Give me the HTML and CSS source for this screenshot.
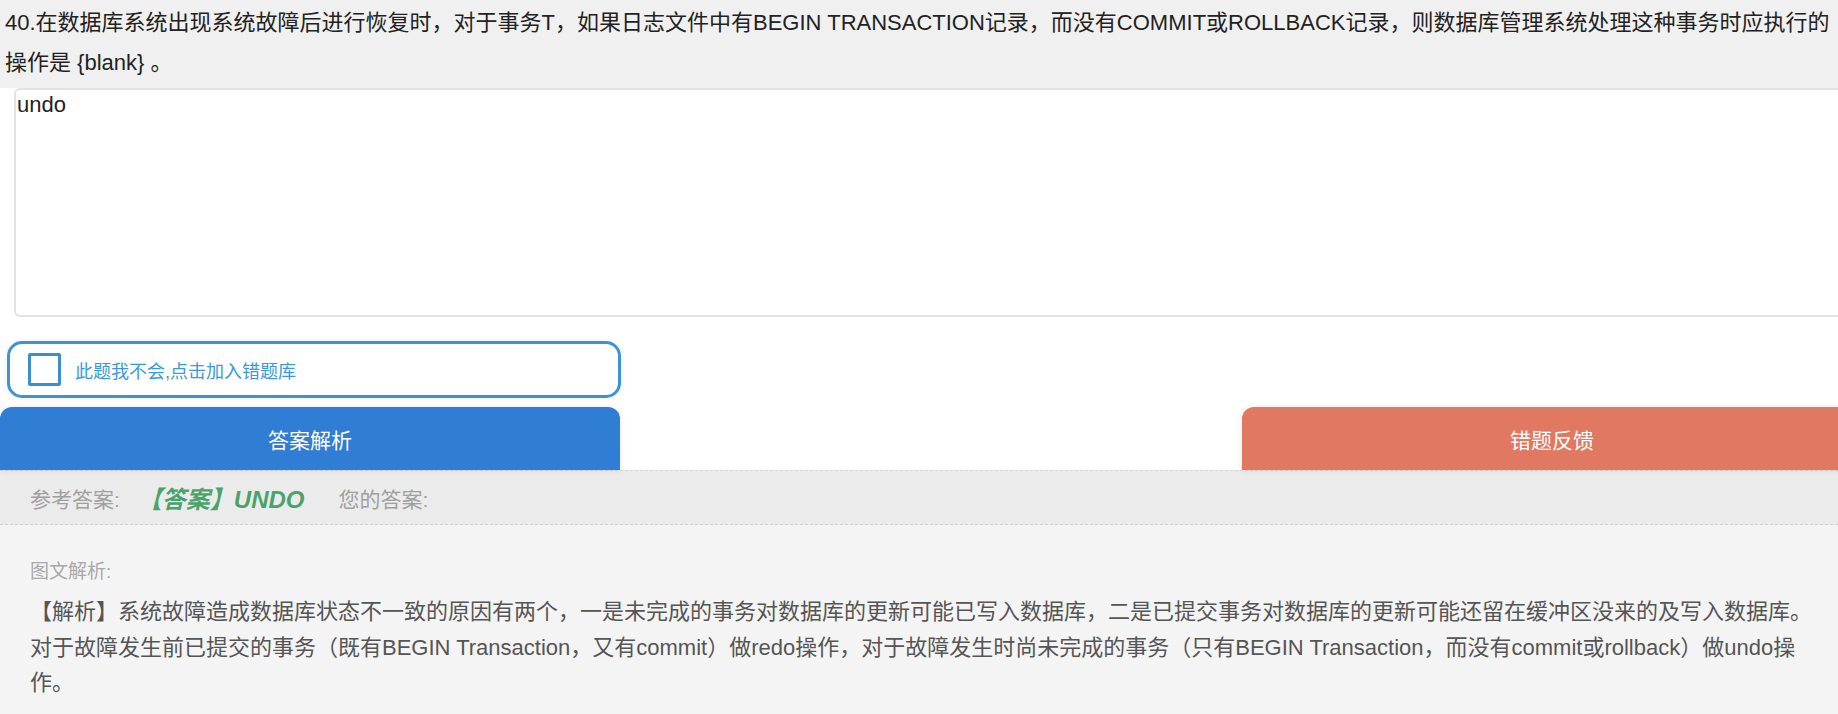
FILE: index.html
```html
<!DOCTYPE html>
<html lang="zh-CN">
<head>
    <meta charset="UTF-8">
    <meta name="viewport" content="width=device-width, initial-scale=1.0">
    <title>练习题</title>
    <link rel="stylesheet" href="styles.css">
</head>
<body>
    <div class="question">40.在数据库系统出现系统故障后进行恢复时，对于事务T，如果日志文件中有BEGIN TRANSACTION记录，而没有COMMIT或ROLLBACK记录，则数据库管理系统处理这种事务时应执行的操作是 {blank} 。</div>

    <textarea class="answer-input">undo</textarea>

    <label class="wrong-toggle">
        <span class="check-box"></span>
        <span class="wrong-text">此题我不会,点击加入错题库</span>
    </label>

    <div class="actions">
        <button class="btn btn-analysis">答案解析</button>
        <button class="btn btn-feedback">错题反馈</button>
    </div>

    <div class="answer-bar">
        <span class="label">参考答案:</span>
        <span class="right-answer">【答案】UNDO</span>
        <span class="label">您的答案:</span>
    </div>

    <div class="analysis">
        <div class="analysis-title">图文解析:</div>
        <p class="analysis-text">【解析】系统故障造成数据库状态不一致的原因有两个，一是未完成的事务对数据库的更新可能已写入数据库，二是已提交事务对数据库的更新可能还留在缓冲区没来的及写入数据库。对于故障发生前已提交的事务（既有BEGIN Transaction，又有commit）做redo操作，对于故障发生时尚未完成的事务（只有BEGIN Transaction，而没有commit或rollback）做undo操作。</p>
    </div>
</body>
</html>
```

FILE: styles.css
```css
body {
    margin: 0;
    font-family: "Liberation Sans", "Noto Sans CJK SC", sans-serif;
    background: #ffffff;
    color: #222;
    overflow: hidden;
}

.question {
    background-color: #f0f0f0;
    font-size: 22px;
    line-height: 40px;
    padding: 3px 0 5px 5px;
}

.answer-input {
    display: block;
    box-sizing: border-box;
    width: calc(100% + 10px);
    height: 229px;
    margin: 0 0 0 14px;
    padding: 2px 1px;
    border: 2px solid #e2e2e2;
    border-radius: 6px;
    font-family: "Liberation Sans", "Noto Sans CJK SC", sans-serif;
    font-size: 22px;
    color: #222;
    resize: none;
    outline: none;
}

.wrong-toggle {
    display: flex;
    align-items: center;
    box-sizing: border-box;
    width: 614px;
    height: 57px;
    margin: 24px 0 0 7px;
    border: 3px solid #3d93d3;
    border-radius: 15px;
    box-shadow: 0 0 6px rgba(0, 0, 0, 0.08);
    cursor: pointer;
}

.check-box {
    box-sizing: border-box;
    width: 33px;
    height: 33px;
    margin-left: 18px;
    border: 3px solid #3b8fd0;
    border-radius: 2px;
}

.wrong-text {
    margin-left: 14px;
    font-size: 18px;
    color: #3a9ad8;
}

.actions {
    display: flex;
    justify-content: space-between;
    width: 1862px;
    margin-top: 9px;
}

.btn {
    width: 620px;
    height: 63px;
    border: none;
    border-radius: 12px 12px 0 0;
    color: #ffffff;
    font-family: "Liberation Sans", "Noto Sans CJK SC", sans-serif;
    font-size: 21px;
    cursor: pointer;
    box-shadow: 0 0 6px rgba(0, 0, 0, 0.1);
}

.btn-analysis {
    background-color: #2f7dd5;
}

.btn-feedback {
    background-color: #e07862;
}

.answer-bar {
    display: flex;
    align-items: center;
    height: 53px;
    padding-left: 30px;
    background-color: #ebebeb;
    border-top: 1px dashed #d4d4d4;
    border-bottom: 1px dashed #cfcfcf;
    font-size: 21px;
}

.answer-bar .label {
    color: #a0a0a0;
}

.right-answer {
    margin: 0 34px 0 18px;
    font-size: 24px;
    font-weight: bold;
    font-style: italic;
    color: #4aa36a;
}

.analysis {
    background-color: #f4f4f4;
    padding: 29px 20px 40px 30px;
    color: #555;
}

.analysis-title {
    font-size: 19px;
    line-height: 36px;
    margin-bottom: 4px;
    color: #a8a8a8;
}

.analysis-text {
    margin: 0;
    font-size: 22px;
    line-height: 35.5px;
}
```
